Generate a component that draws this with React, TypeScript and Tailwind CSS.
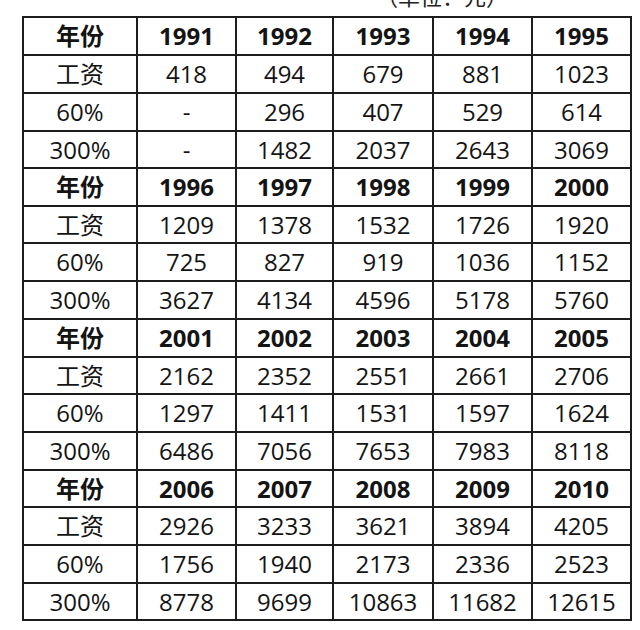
const blocks = [
  {
    years: ['1991', '1992', '1993', '1994', '1995'],
    wage: ['418', '494', '679', '881', '1023'],
    p60: ['-', '296', '407', '529', '614'],
    p300: ['-', '1482', '2037', '2643', '3069'],
  },
  {
    years: ['1996', '1997', '1998', '1999', '2000'],
    wage: ['1209', '1378', '1532', '1726', '1920'],
    p60: ['725', '827', '919', '1036', '1152'],
    p300: ['3627', '4134', '4596', '5178', '5760'],
  },
  {
    years: ['2001', '2002', '2003', '2004', '2005'],
    wage: ['2162', '2352', '2551', '2661', '2706'],
    p60: ['1297', '1411', '1531', '1597', '1624'],
    p300: ['6486', '7056', '7653', '7983', '8118'],
  },
  {
    years: ['2006', '2007', '2008', '2009', '2010'],
    wage: ['2926', '3233', '3621', '3894', '4205'],
    p60: ['1756', '1940', '2173', '2336', '2523'],
    p300: ['8778', '9699', '10863', '11682', '12615'],
  },
];

const Cell = ({ children, bold }: { children: React.ReactNode; bold?: boolean }) => (
  <div
    className={`bg-white flex items-center justify-center text-[24px] leading-none text-[#141414] ${
      bold ? 'font-bold' : 'font-normal'
    }`}
  >
    {children}
  </div>
);

export default function App() {
  return (
    <div
      className="w-[640px] h-[630px] bg-white overflow-hidden"
      style={{ fontFamily: '"Open Sans", "Noto Sans CJK SC", sans-serif' }}
    >
      {/* unit caption, mostly cut off at top */}
      <div className="h-[16px] overflow-hidden flex justify-end pr-[132px]">
        <span className="block mt-[-15px] text-[22px] leading-none text-[#222]">（单位：元）</span>
      </div>

      <div className="pl-[22px]">
        <div className="grid grid-cols-[112px_97px_95px_98px_97px_97px] grid-rows-[36px_36px_36px_35px_36px_35px_36px_36px_36px_35px_36px_36px_35px_36px_36px_35px] gap-[2px] p-[2px] bg-[#1c1c1c] w-[610px]">
          {blocks.map((b, i) => (
            <>
              <Cell key={`y${i}`} bold>年份</Cell>
              {b.years.map((v, j) => (
                <Cell key={`y${i}-${j}`} bold>{v}</Cell>
              ))}
              <Cell key={`w${i}`}>工资</Cell>
              {b.wage.map((v, j) => (
                <Cell key={`w${i}-${j}`}>{v}</Cell>
              ))}
              <Cell key={`a${i}`}>60%</Cell>
              {b.p60.map((v, j) => (
                <Cell key={`a${i}-${j}`}>{v}</Cell>
              ))}
              <Cell key={`b${i}`}>300%</Cell>
              {b.p300.map((v, j) => (
                <Cell key={`b${i}-${j}`}>{v}</Cell>
              ))}
            </>
          ))}
        </div>
      </div>
    </div>
  );
}
